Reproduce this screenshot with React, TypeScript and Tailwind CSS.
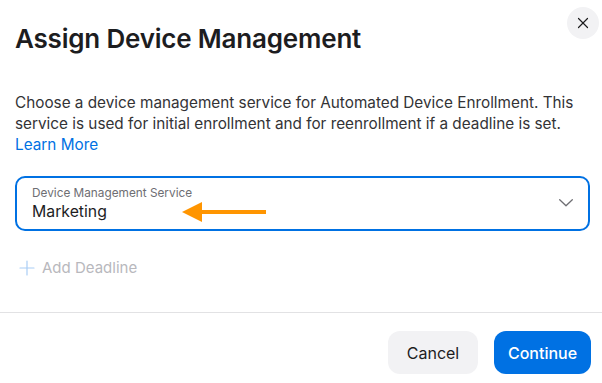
import { X, Plus } from 'lucide-react';

export default function App() {
  return (
    <div
      className="w-[602px] h-[383px] bg-white flex flex-col overflow-hidden text-[#1d1d1f]"
      style={{ fontFamily: 'Inter, "Noto Sans", sans-serif' }}
    >
      <div className="flex items-start justify-between pl-[15px]">
        <h1 className="pt-[23px] text-[26px] leading-[32px] font-semibold tracking-[-0.2px]">
          Assign Device Management
        </h1>
        <button className="mt-[7px] mr-[3px] w-8 h-8 rounded-full bg-[#f2f2f4] flex items-center justify-center">
          <X size={18} strokeWidth={1.6} className="text-[#1d1d1f]" />
        </button>
      </div>

      <div className="pl-[15px] pr-[12px] mt-[37px]">
        <p className="text-[15.3px] leading-[21px] text-[#333336]">
          Choose a device management service for Automated Device Enrollment. This service is used for initial
          enrollment and for reenrollment if a deadline is set.{' '}
          <span className="block text-[#0071e3]">Learn More</span>
        </p>

        <div className="mt-[21px] h-[55px] border-2 border-[#0071e3] rounded-[10px] pl-[15px] pr-[15px] flex items-center">
          <div className="flex-1 flex flex-col pt-[1px]">
            <span className="text-[11.8px] leading-[15px] text-[#6e6e73]">Device Management Service</span>
            <div className="flex items-center">
              <span className="text-[15.8px] leading-[21px] text-[#1d1d1f]">Marketing</span>
              <svg width="86" height="22" viewBox="0 0 86 22" className="ml-[75px]">
                <polygon points="0,11 20,1 20,21" fill="#ff9500" />
                <rect x="18" y="9" width="66" height="4" fill="#ff9500" />
              </svg>
            </div>
          </div>
          <svg width="14" height="8" viewBox="0 0 14 8" fill="none" className="mb-[1px]">
            <polyline points="0.7,0.7 7,6.8 13.3,0.7" stroke="#6e6e73" strokeWidth="1.3" strokeLinecap="round" strokeLinejoin="round" />
          </svg>
        </div>

        <div className="mt-[26px] flex items-center h-[22px]">
          <Plus size={24} strokeWidth={1.2} className="text-[#a9cdf5]" />
          <span className="ml-[3px] text-[15px] text-[#b8b8bd]">Add Deadline</span>
        </div>
      </div>

      <div className="mt-[33px] border-t border-[#e2e2e4]" />

      <div className="flex justify-end gap-4 pr-[11px] mt-[18px]">
        <button className="w-[90px] h-[43px] rounded-[12px] bg-[#f2f2f4] text-[16px] text-[#1d1d1f]">Cancel</button>
        <button className="w-[97px] h-[43px] rounded-[12px] bg-[#0071e3] text-[16px] font-medium text-white">
          Continue
        </button>
      </div>
    </div>
  );
}
